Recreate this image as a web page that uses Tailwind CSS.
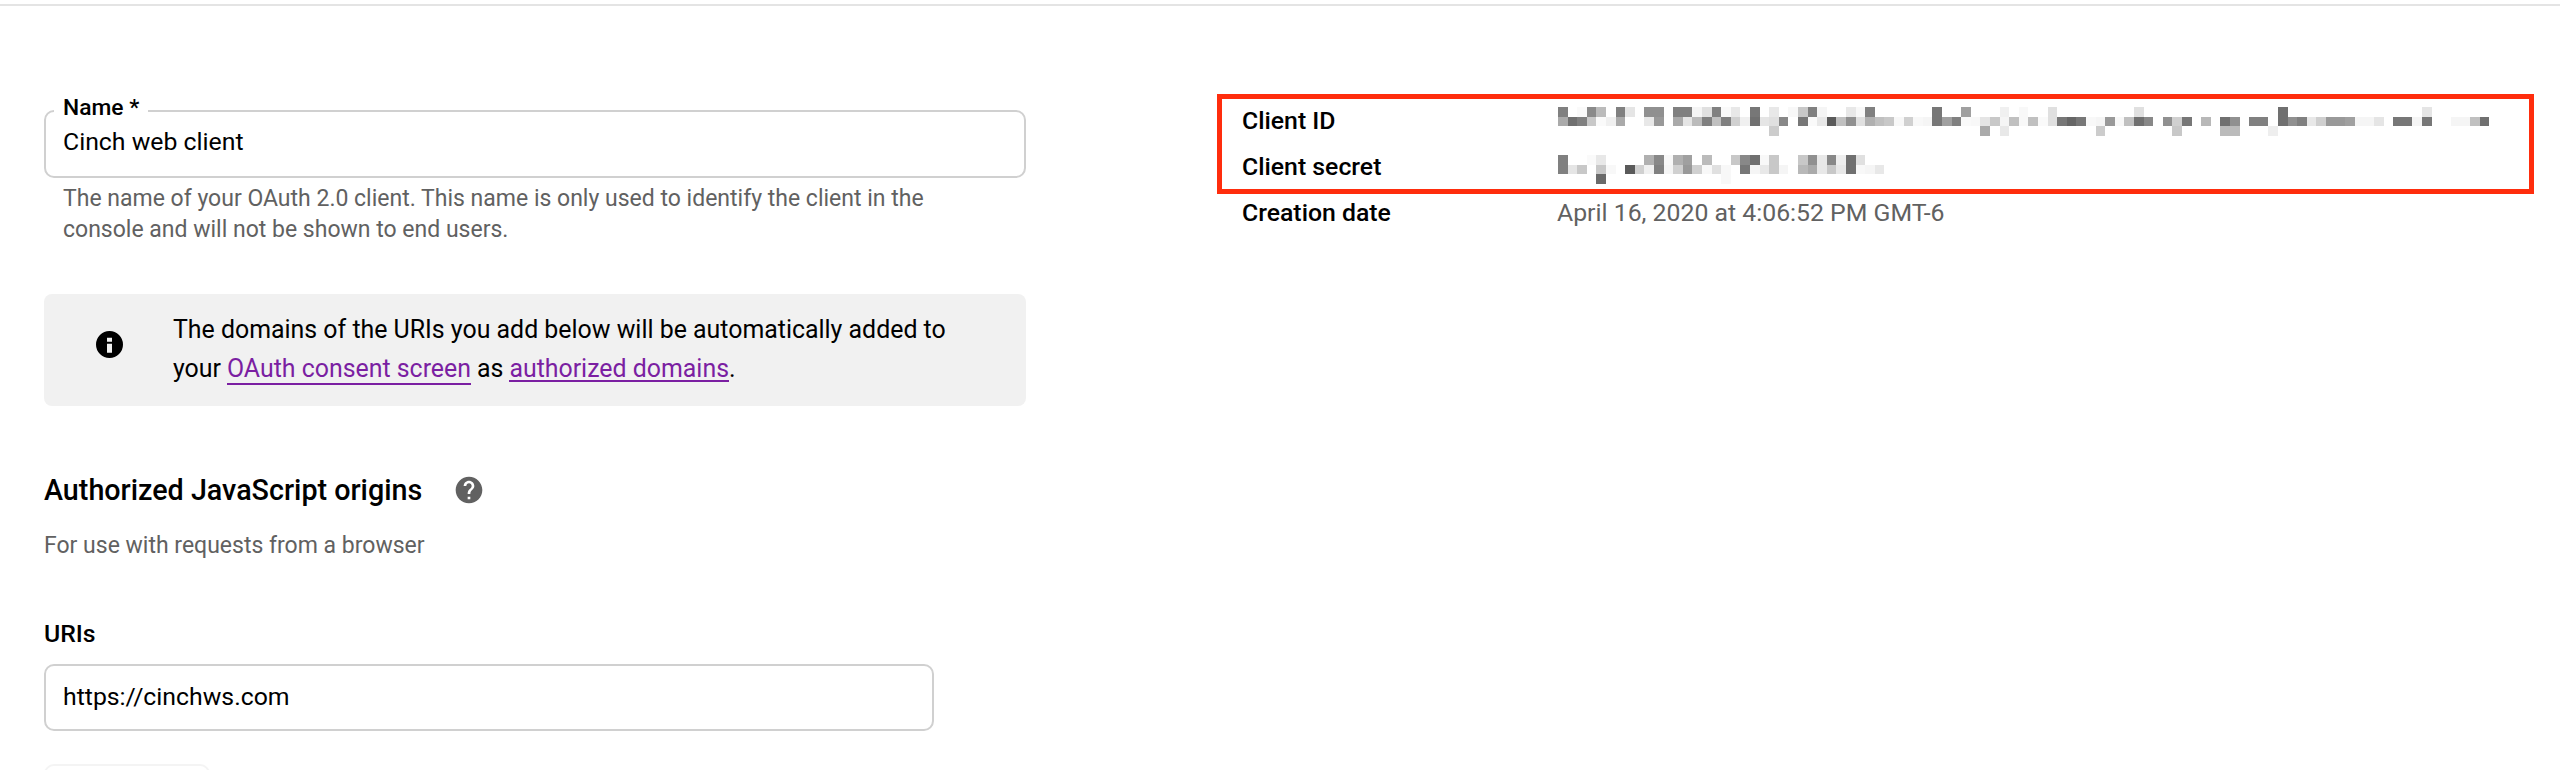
<!DOCTYPE html>
<html lang="en">
<head>
    <meta charset="UTF-8">
    <meta name="viewport" content="width=device-width, initial-scale=1.0">
    <title>Client ID for Web application</title>
    <script src="https://cdn.jsdelivr.net/npm/@tailwindcss/browser@4"></script>
</head>
<body class="bg-white h-[770px] overflow-hidden font-['Roboto',sans-serif] text-[#000]">
    <div class="mt-[4px] h-[2px] bg-[#e4e4e4]"></div>

    <div class="flex">
        <!-- left column: the form -->
        <div class="ml-[44px] w-[982px] pt-[104px] shrink-0">
            <div class="relative h-[68px] rounded-[10px] border-2 border-[#d0d0d0] flex items-center pl-[17px] pb-[4px] text-[24.8px]">
                <span class="absolute left-[8px] top-[-19px] bg-white px-[9px] text-[22.8px] leading-[30px] font-medium">Name *</span>
                Cinch web client
            </div>
            <p class="mt-[5px] pl-[19px] w-[900px] text-[23px] leading-[31px] text-[#616161]">The name of your OAuth 2.0 client. This name is only used to identify the client in the console and will not be shown to end users.</p>

            <div class="mt-[49px] h-[112px] rounded-[8px] bg-[#f1f1f1] flex items-center">
                <svg class="ml-[52px] mb-[12px] w-[27px] h-[27px] shrink-0" viewBox="0 0 27 27" fill="#000"><path fill-rule="evenodd" d="M13.5 0a13.5 13.5 0 1 0 0 27a13.5 13.5 0 1 0 0-27zM11 6.8h5v4h-5zM11 12.8h5v9h-5z"/></svg>
                <div class="ml-[50px] mb-[2px] text-[24.9px] leading-[39px]">
                    <div>The domains of the URIs you add below will be automatically added to</div>
                    <div class="flex gap-[6px]">
                        <span>your</span>
                        <span><a class="text-[#7b1fa2] border-b-2 border-[#7b1fa2]">OAuth consent screen</a></span>
                        <span>as</span>
                        <span class="flex"><a class="h-[33px] text-[#7b1fa2] border-b-2 border-[#7b1fa2]">authorized domains</a><span>.</span></span>
                    </div>
                </div>
            </div>

            <div class="mt-[68px] flex items-center h-[32px]">
                <h2 class="text-[28.7px] leading-[32px] font-medium">Authorized JavaScript origins</h2>
                <svg class="ml-[31px] w-[32px] h-[32px]" viewBox="0 0 24 24" fill="#616161"><path d="M12 2C6.48 2 2 6.48 2 12s4.48 10 10 10 10-4.48 10-10S17.52 2 12 2zm1 17h-2v-2h2v2zm2.07-7.75l-.9.92C13.45 12.9 13 13.5 13 15h-2v-.5c0-1.1.45-2.1 1.17-2.83l1.24-1.26c.37-.36.59-.86.59-1.41 0-1.1-.9-2-2-2s-2 .9-2 2H8c0-2.21 1.79-4 4-4s4 1.79 4 4c0 .88-.36 1.68-.93 2.25z"/></svg>
            </div>
            <p class="mt-[25px] text-[23px] leading-[30px] text-[#616161]">For use with requests from a browser</p>

            <div class="mt-[58px] text-[24.8px] leading-[30px] font-medium">URIs</div>
            <div class="mt-[15px] w-[890px] h-[67px] rounded-[10px] border-2 border-[#d0d0d0] flex items-center pl-[17px] pb-[2px] text-[24.8px]">https://cinchws.com</div>
            <div class="mt-[33px] w-[166px] h-[40px] rounded-[10px] border-2 border-[#f4f4f4]"></div>
        </div>

        <!-- right column: client details -->
        <div class="ml-[191px] w-[1317px] pt-[88px] shrink-0">
            <div class="border-[5px] border-[#ff2d0d] h-[100px] relative">
                <div class="absolute left-[20px] top-[7px] text-[24.8px] leading-[30px] font-medium">Client ID</div>
                <div class="absolute left-[20px] top-[53px] text-[24.8px] leading-[30px] font-medium">Client secret</div>
                <svg id="client-id" class="absolute left-[336px] top-[8px]" width="940" height="29" shape-rendering="crispEdges"></svg>
                <svg id="client-secret" class="absolute left-[336px] top-[56px]" width="340" height="29" shape-rendering="crispEdges"></svg>
            </div>
            <div class="flex mt-[4px] text-[24.8px] leading-[30px]">
                <div class="ml-[25px] w-[315px] font-medium">Creation date</div>
                <div class="text-[#616161]">April 16, 2020 at 4:06:52 PM GMT-6</div>
            </div>
        </div>
    </div>

    <script>
        // blurred values, one map per row: cell index -> grey
        const clientId = [
            {0:0x80,2:0xfa,3:0x8a,4:0xbb,6:0x80,7:0xe5,9:0x90,10:0x90,12:0x80,13:0x80,14:0xf5,15:0xe0,16:0x80,17:0xfa,18:0xe8,20:0x77,22:0xe8,24:0xf8,25:0xc8,26:0x80,27:0xf5,30:0xe8,31:0xf8,32:0x80,39:0x77,42:0xa0,46:0xf0,48:0xf8,51:0xe0,60:0xe0,75:0x70,90:0xe5},
            {0:0xaa,1:0x70,2:0x80,3:0xc8,4:0xfa,5:0xf0,6:0xaa,9:0xe8,10:0x99,12:0xaa,13:0xe5,14:0xbb,15:0x80,16:0xc0,17:0x80,18:0xd0,19:0xf0,20:0x70,21:0xe5,22:0xe0,23:0x88,25:0x77,26:0xfa,27:0xe8,28:0x5a,29:0xc0,30:0x90,31:0xe0,32:0xb0,33:0xc0,34:0xc8,35:0xf8,36:0xd0,37:0xf8,38:0xf5,39:0x77,40:0xa0,41:0x80,42:0xfa,43:0xf8,44:0xe5,45:0xc8,46:0xf5,47:0xc0,48:0xf8,49:0xc0,50:0xfa,51:0xe0,52:0x77,53:0x66,54:0x77,55:0xf8,56:0xf5,57:0x99,58:0xf8,59:0xc0,60:0x70,61:0x88,63:0x90,64:0xd0,65:0x77,67:0xb8,69:0x70,70:0x90,72:0x80,73:0x80,75:0x70,76:0x90,77:0x80,78:0xe8,79:0xcf,80:0x99,81:0x99,82:0xa0,83:0xf5,84:0xf5,85:0xe5,87:0x77,88:0x77,89:0xf5,90:0x77,93:0xf5,94:0xf5,95:0xc0,96:0x70},
            {22:0xcc,44:0xaa,46:0xe8,56:0xcc,64:0xc8,69:0xbb,70:0xbb,74:0xee}
        ];
        const clientSecret = [
            {0:0x80,3:0xfa,4:0xe8,9:0xb0,10:0x88,11:0xf8,12:0xb0,13:0xa0,15:0xbb,18:0xc8,19:0x88,20:0x70,21:0xf8,22:0xc8,25:0xc8,26:0x90,27:0xe8,28:0x88,29:0xee,30:0x70,31:0xe0},
            {0:0x80,1:0xe5,2:0xc8,4:0xc8,5:0xf8,7:0x5a,8:0xd0,9:0xf0,10:0x80,11:0xf5,12:0xd0,13:0x99,14:0xd0,15:0xf8,16:0xe0,17:0xf8,19:0x77,20:0xf5,21:0xe8,22:0xc8,23:0xf5,25:0xb8,26:0xaa,27:0xe8,28:0xc8,29:0xe8,30:0x70,31:0xf8,32:0xf5,33:0xe8},
            {4:0x6a,17:0xf8}
        ];

        function drawBlur(id, rows) {
            const svg = document.getElementById(id);
            let out = '';
            rows.forEach((row, y) => {
                for (const i in row) {
                    const g = row[i];
                    out += `<rect x="${i * 9.6}" y="${y * 9.6}" width="9.6" height="9.6" fill="rgb(${g},${g},${g})"/>`;
                }
            });
            svg.innerHTML = out;
        }

        drawBlur('client-id', clientId);
        drawBlur('client-secret', clientSecret);
    </script>
</body>
</html>
